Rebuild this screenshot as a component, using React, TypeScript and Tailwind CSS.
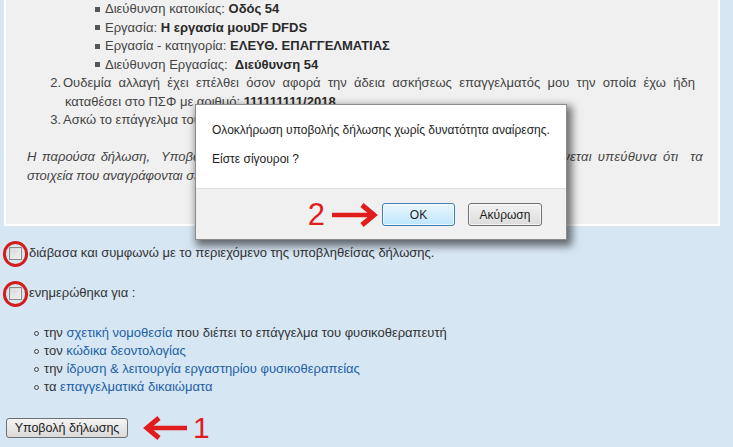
import React from "react";

const font = { fontFamily: '"Liberation Sans", Arial, sans-serif' };

function Bullet({ label, value, gap = false }: { label: string; value: string; gap?: boolean }) {
  return (
    <div className="flex items-center h-[18.5px] pl-[89px]">
      <span className="w-[5px] h-[5px] bg-[#555] mr-[5px]" />
      <span>
        {label}
        {gap ? "\u00a0 " : " "}
        <b className="text-[#2a2a2a]">{value}</b>
      </span>
    </div>
  );
}

function Checkbox({ circled }: { circled?: boolean }) {
  return (
    <span className="relative inline-block w-[13px] h-[13px] border border-[#8a8a8a] bg-gradient-to-br from-[#d0d0d0] to-[#f7f7f7] shrink-0">
      <span className="absolute inset-[1px] border border-[#e8e8e8]" />
      {circled && (
        <span className="absolute -left-[7px] -top-[7px] w-[25px] h-[26px] rounded-full border-[3px] border-[#d41c1c]" />
      )}
    </span>
  );
}

function Circle() {
  return <span className="w-[5px] h-[5px] rounded-full border border-[#444] mr-[5px]" />;
}

export default function App() {
  return (
    <div style={font} className="relative w-[733px] h-[447px] overflow-hidden bg-[#d6e6f3]">
      {/* Panel */}
      <div className="ml-[4px] w-[716px] h-[226px] border-2 border-t-0 border-white bg-[#f0f0f0] text-[13px] text-[#444] leading-[18.5px]">
        <Bullet label="Διεύθυνση κατοικίας:" value="Οδός 54" />
        <Bullet label="Εργασία:" value="Η εργασία μουDF DFDS" />
        <Bullet label="Εργασία - κατηγορία:" value="ΕΛΕΥΘ. ΕΠΑΓΓΕΛΜΑΤΙΑΣ" />
        <Bullet label="Διεύθυνση Εργασίας:" value="Διεύθυνση 54" gap />
        <div className="flex h-[18.5px]">
          <span className="w-[57px] text-right pr-[2px]">2.</span>
          <span className="w-[632px] text-justify [text-align-last:justify]">
            Ουδεμία αλλαγή έχει επέλθει όσον αφορά την άδεια ασκήσεως επαγγελματός μου την οποία έχω ήδη
          </span>
        </div>
        <div className="pl-[59px] h-[18.5px]">
          καταθέσει στο ΠΣΦ με αριθμό: <b className="text-[#2a2a2a]">111111111/2018</b>
        </div>
        <div className="flex h-[18.5px]">
          <span className="w-[57px] text-right pr-[2px]">3.</span>
          <span>Ασκώ το επάγγελμα του φυσικοθεραπευτή ως ελεύθερος επαγγελματίας.</span>
        </div>
        <div className="h-[18.5px]" />
        <div className="pl-[21px] w-[697px] italic">
          <div className="h-[18.5px] flex justify-between">
            <span className="[word-spacing:2px]">Η παρούσα δήλωση,&nbsp; Υποβάλλεται ηλεκτρονικά και ο/η δηλών/ούσα</span>
            <span className="tracking-[0.3px] [word-spacing:2px]">ευθύνεται υπεύθυνα ότι&nbsp; τα</span>
          </div>
          <div className="h-[18.5px]">στοιχεία που αναγράφονται σε αυτήν είναι αληθή.</div>
        </div>
      </div>

      {/* Bottom section */}
      <div className="text-[13px] text-[#333]">
        <div className="flex items-center h-[18px] mt-[18px] pl-[9px] gap-[7px]">
          <Checkbox circled />
          <span>διάβασα και συμφωνώ με το περιεχόμενο της υποβληθείσας δήλωσης.</span>
        </div>
        <div className="flex items-center h-[18px] mt-[22px] pl-[9px] gap-[7px]">
          <Checkbox circled />
          <span>ενημερώθηκα για :</span>
        </div>
        <ul className="mt-[22px] pl-[34px] leading-[18px]">
          <li className="flex items-center h-[18px]">
            <Circle />
            <span>
              την <span className="text-[#1d5fa6]">σχετική νομοθεσία</span> που διέπει το επάγγελμα του φυσικοθεραπευτή
            </span>
          </li>
          <li className="flex items-center h-[18px]">
            <Circle />
            <span>
              τον <span className="text-[#1d5fa6]">κώδικα δεοντολογίας</span>
            </span>
          </li>
          <li className="flex items-center h-[18px]">
            <Circle />
            <span>
              την <span className="text-[#1d5fa6]">ίδρυση &amp; λειτουργία εργαστηρίου φυσικοθεραπείας</span>
            </span>
          </li>
          <li className="flex items-center h-[18px]">
            <Circle />
            <span>
              τα <span className="text-[#1d5fa6]">επαγγελματικά δικαιώματα</span>
            </span>
          </li>
        </ul>
        <div className="flex items-center mt-[17px] pl-[6px]">
          <button className="w-[122px] h-[20px] border border-[#707070] rounded-[3px] bg-gradient-to-b from-[#f4f4f4] to-[#dadada] text-[12.5px] text-[#1a1a1a]">
            Υποβολή δήλωσης
          </button>
          <svg width="48" height="26" viewBox="0 0 48 26" className="ml-[15px]">
            <path d="M6 13 H44" stroke="#e01c1c" strokeWidth="4.5" fill="none" />
            <path d="M16 3 L4 13 L16 23" stroke="#e01c1c" strokeWidth="5" fill="none" strokeLinejoin="miter" />
          </svg>
          <span className="text-[30px] leading-none text-[#e01c1c] ml-[2px]">1</span>
        </div>
      </div>

      {/* Dialog */}
      <div className="absolute left-[195px] top-[104px] w-[372px] h-[136px] border border-[#8c8c8c] bg-white shadow-[3px_4px_8px_2px_rgba(0,0,0,0.55)] flex flex-col text-[12px] text-[#1e1e1e]">
        <div className="flex-1 pl-[16px] pt-[16px]">
          <div className="h-[16px]">Ολοκλήρωση υποβολής δήλωσης χωρίς δυνατότητα αναίρεσης.</div>
          <div className="h-[16px] mt-[13px]">Είστε σίγουροι ?</div>
        </div>
        <div className="h-[51px] border-t border-[#dfdfdf] bg-[#f0f0f0] flex items-start justify-end pt-[14px] pr-[24px]">
          <span className="text-[31px] leading-[24px] text-[#e01c1c] mr-[5px]">2</span>
          <svg width="48" height="24" viewBox="0 0 48 24" className="mr-[4px]">
            <path d="M2 12 H40" stroke="#e01c1c" strokeWidth="4.5" fill="none" />
            <path d="M32 2 L44 12 L32 22" stroke="#e01c1c" strokeWidth="5" fill="none" strokeLinejoin="miter" />
          </svg>
          <button className="w-[73px] h-[23px] border border-[#3c7fb1] rounded-[3px] bg-gradient-to-b from-[#eaf6fd] to-[#bee6fd] shadow-[inset_0_0_0_1px_rgba(255,255,255,0.7)] text-[12px]">
            OK
          </button>
          <button className="ml-[13px] w-[74px] h-[23px] border border-[#707070] rounded-[3px] bg-gradient-to-b from-[#f2f2f2] to-[#dcdcdc] shadow-[inset_0_0_0_1px_rgba(255,255,255,0.7)] text-[12px]">
            Ακύρωση
          </button>
        </div>
      </div>
    </div>
  );
}
